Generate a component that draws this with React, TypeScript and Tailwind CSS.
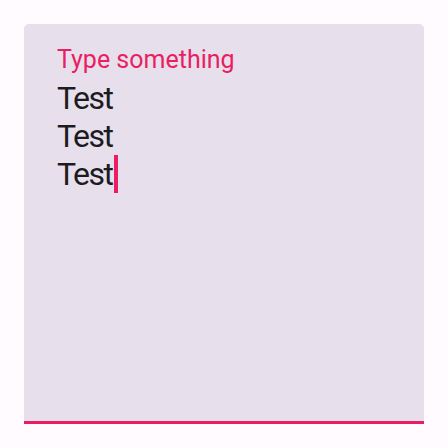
export default function App() {
  return (
    <div className="w-[448px] h-[448px] bg-[#fffbfe] pt-6 px-6" style={{ fontFamily: "Roboto, 'Liberation Sans', sans-serif" }}>
      <div className="h-[400px] bg-[#e7e0ec] rounded-t-[5px] border-b-[3px] border-[#e91e63] pl-[33px] pt-[22px]">
        <div className="text-[25px] leading-[28px] text-[#e91e63]">Type something</div>
        <div className="mt-[5px] text-[32px] leading-[38px] text-[#1c1b1f] tracking-[-1.5px]">
          <div>Test</div>
          <div>Test</div>
          <div className="flex items-stretch">
            <span>Test</span>
            <span className="w-[4px] h-[38px] bg-[#e91e63] inline-block ml-[1px]" />
          </div>
        </div>
      </div>
    </div>
  );
}
